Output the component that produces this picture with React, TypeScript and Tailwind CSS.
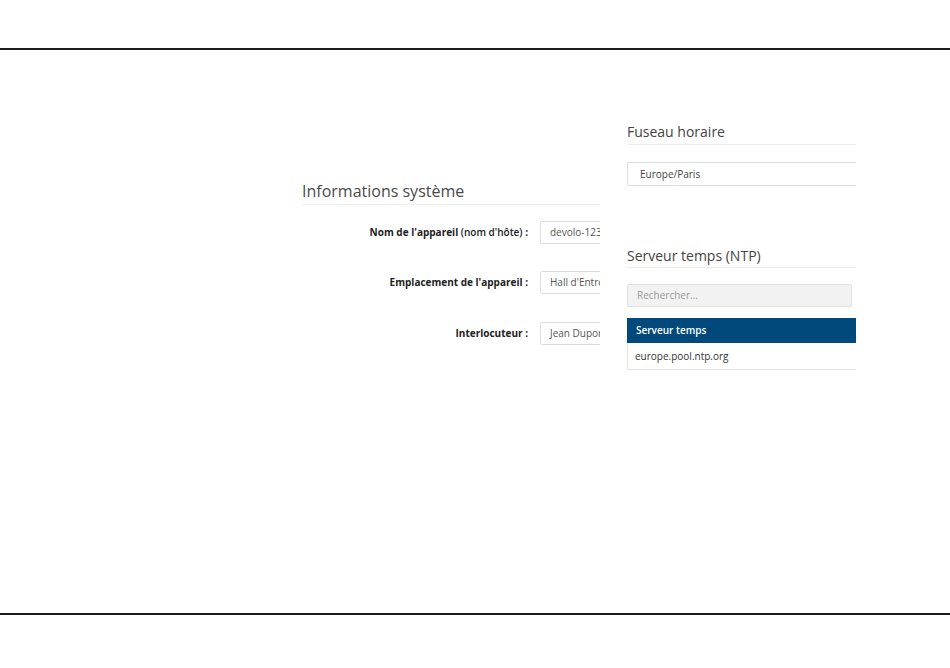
import React from "react";

const fields = [
  { bold: "Nom de l'appareil", light: " (nom d'hôte)", value: "devolo-123456", mt: "mt-[16px]" },
  { bold: "Emplacement de l'appareil", light: "", value: "Hall d'Entrée", mt: "mt-[27px]" },
  { bold: "Interlocuteur", light: "", value: "Jean Dupont", mt: "mt-[28px]" },
];

export default function App() {
  return (
    <div className="w-[950px] h-[668px] bg-white overflow-hidden font-['Open_Sans',sans-serif]">
      <div className="h-12" />
      <div className="h-[2px] bg-[#1c1c1c]" />

      <div className="h-[563px] flex">
        {/* Left: system info form */}
        <div className="ml-[302px] w-[298px] pt-[129px] overflow-hidden">
          <h2 className="text-[16px] leading-6 text-[#4a4a4a] pb-[1px] border-b border-[#eeeeee]">
            Informations système
          </h2>
          {fields.map((f) => (
            <div key={f.bold} className={`${f.mt} flex items-center gap-3`}>
              <label className="w-[226px] shrink-0 text-right text-[10px] text-[#222]">
                <span className="font-bold">{f.bold}</span>
                {f.light && <span className="font-semibold">{f.light}</span>}
                <span className="font-bold"> :</span>
              </label>
              <div className="w-[140px] shrink-0 h-[23px] flex items-center pl-[9px] border border-[#dddddd] rounded-[2px] text-[10px] text-[#555] whitespace-nowrap">
                {f.value}
              </div>
            </div>
          ))}
        </div>

        {/* Right: timezone + NTP */}
        <div className="ml-[27px] w-[229px] pt-[72px] overflow-hidden">
          <h2 className="text-[14px] leading-5 text-[#444] pb-[2px] border-b border-[#eeeeee]">
            Fuseau horaire
          </h2>
          <div className="mt-[17px] w-[260px] h-[24px] flex items-center pl-[12px] border border-[#dddddd] rounded-[2px] text-[10px] text-[#444]">
            Europe/Paris
          </div>

          <h2 className="mt-[60px] text-[14px] leading-5 text-[#444] pb-[1px] border-b border-[#eeeeee]">
            Serveur temps (NTP)
          </h2>
          <div className="mt-[16px] w-[225px] h-[23px] flex items-center pl-[9px] bg-[#f2f2f2] border border-[#e0e0e0] rounded-[2px] text-[10px] text-[#999]">
            Rechercher...
          </div>
          <div className="mt-[11px] w-[260px]">
            <div className="h-[25px] flex items-center pl-[9px] bg-[#00497a] text-[10px] font-semibold text-white">
              Serveur temps
            </div>
            <div className="h-[27px] flex items-center pl-[7px] border-l border-b border-[#e5e5e5] text-[10px] text-[#333]">
              europe.pool.ntp.org
            </div>
          </div>
        </div>
      </div>

      <div className="h-[2px] bg-[#1c1c1c]" />
    </div>
  );
}
